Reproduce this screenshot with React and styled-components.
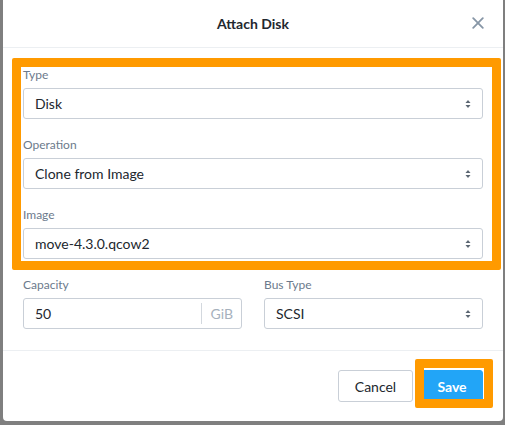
import React from 'react';
import styled, { createGlobalStyle } from 'styled-components';

// Estilos globais

const GlobalStyle = createGlobalStyle`
  html, body {
    margin: 0;
    padding: 0;
    background: #7f7f7f;
  }
  * {
    box-sizing: border-box;
  }
`;

// Fundo (overlay da página)

const Backdrop = styled.div`
  width: 505px;
  height: 425px;
  padding-left: 3px;
  overflow: hidden;
  font-family: Lato, 'Open Sans', sans-serif;
`;

// Janela do modal

const Modal = styled.div`
  position: relative;
  width: 500px;
  height: 421px;
  background: #fff;
  border-radius: 0 0 4px 4px;
  display: flex;
  flex-direction: column;
`;

const Header = styled.div`
  position: relative;
  height: 48px;
  flex: none;
  display: flex;
  align-items: center;
  justify-content: center;
  border-bottom: 1px solid #eceff2;
  padding-bottom: 1px;
`;

const Title = styled.h3`
  margin: 0;
  font-size: 14px;
  font-weight: 700;
  color: #22272e;
`;

const Close = styled.button`
  position: absolute;
  right: 19px;
  top: 17px;
  width: 12px;
  height: 12px;
  padding: 0;
  border: none;
  background: none;
  display: flex;
  svg {
    display: block;
  }
`;

const Body = styled.div`
  padding: 20px 20px 21px;
  border-bottom: 1px solid #eceff2;
`;

const Field = styled.div`
  margin-bottom: ${(p) => (p.last ? '0' : '19px')};
`;

const Label = styled.label`
  display: block;
  height: 13px;
  line-height: 13px;
  font-size: 12px;
  color: #6c7a8c;
  margin-bottom: 7px;
`;

const SelectBox = styled.div`
  position: relative;
  height: 31px;
  border: 1px solid #c9cfd7;
  border-radius: 3px;
  display: flex;
  align-items: center;
  padding: 0 11px;
  font-size: 14px;
  color: #22272e;
  background: #fff;
`;

const Arrow = styled.span`
  position: absolute;
  right: 11px;
  top: 50%;
  transform: translateY(-50%);
  display: flex;
`;

const Row = styled.div`
  display: grid;
  grid-template-columns: 219px 219px;
  column-gap: 22px;
`;

const InputBox = styled.div`
  height: 31px;
  border: 1px solid #c9cfd7;
  border-radius: 3px;
  display: flex;
  align-items: center;
  font-size: 14px;
  color: #22272e;
`;

const Valor = styled.span`
  flex: 1;
  padding-left: 11px;
`;

const Unidade = styled.span`
  border-left: 1px solid #d3d8de;
  height: 21px;
  line-height: 21px;
  padding: 0 8px 0 9px;
  color: #a6b1bd;
`;

const Footer = styled.div`
  flex: 1;
  display: flex;
  justify-content: flex-end;
  align-items: flex-start;
  padding: 19px 20px 0;
  gap: 8px;
`;

const Button = styled.button`
  height: 32px;
  padding: 0 ${(p) => (p.primary ? '14px' : '12px')};
  min-width: ${(p) => (p.primary ? '62px' : '75px')};
  border-radius: 3px;
  font-family: inherit;
  font-size: 14px;
  font-weight: ${(p) => (p.primary ? 700 : 400)};
  color: ${(p) => (p.primary ? '#fff' : '#22272e')};
  background: ${(p) => (p.primary ? '#22a5f7' : '#fff')};
  border: 1px solid ${(p) => (p.primary ? '#22a5f7' : '#c9cfd7')};
`;

// Destaque laranja (anotação por cima do conteúdo)

const Destaque = styled.div`
  position: absolute;
  left: ${(p) => p.x}px;
  top: ${(p) => p.y}px;
  width: ${(p) => p.w}px;
  height: ${(p) => p.h}px;
  border: 9px solid #ff9a00;
  border-radius: 2px;
  pointer-events: none;
`;

const SetaSelect = () => (
  <Arrow>
    <svg width="6" height="9" viewBox="0 0 6 9">
      <path d="M3 0.5 L5.5 3.5 H0.5 Z" fill="#5b6672" />
      <path d="M3 8.5 L5.5 5.5 H0.5 Z" fill="#5b6672" />
    </svg>
  </Arrow>
);

const Select = ({ valor }) => (
  <SelectBox>
    {valor}
    <SetaSelect />
  </SelectBox>
);

// Componente Completo

const App = () => {
  return (
    <Backdrop>
      <GlobalStyle />
      <Modal>
        <Header>
          <Title>Attach Disk</Title>
          <Close aria-label="Close">
            <svg width="12" height="12" viewBox="0 0 12 12">
              <path d="M1.2 1.2 L10.8 10.8 M10.8 1.2 L1.2 10.8" stroke="#8796a6" strokeWidth="1.8" strokeLinecap="round" />
            </svg>
          </Close>
        </Header>

        <Body>
          <Field>
            <Label>Type</Label>
            <Select valor="Disk" />
          </Field>
          <Field>
            <Label>Operation</Label>
            <Select valor="Clone from Image" />
          </Field>
          <Field>
            <Label>Image</Label>
            <Select valor="move-4.3.0.qcow2" />
          </Field>
          <Row>
            <Field last>
              <Label>Capacity</Label>
              <InputBox>
                <Valor>50</Valor>
                <Unidade>GiB</Unidade>
              </InputBox>
            </Field>
            <Field last>
              <Label>Bus Type</Label>
              <Select valor="SCSI" />
            </Field>
          </Row>
        </Body>

        <Footer>
          <Button>Cancel</Button>
          <Button primary>Save</Button>
        </Footer>

        <Destaque x={9} y={58} w={489} h={212} />
        <Destaque x={412} y={359} w={78} h={49} />
      </Modal>
    </Backdrop>
  );
};

export default App;
